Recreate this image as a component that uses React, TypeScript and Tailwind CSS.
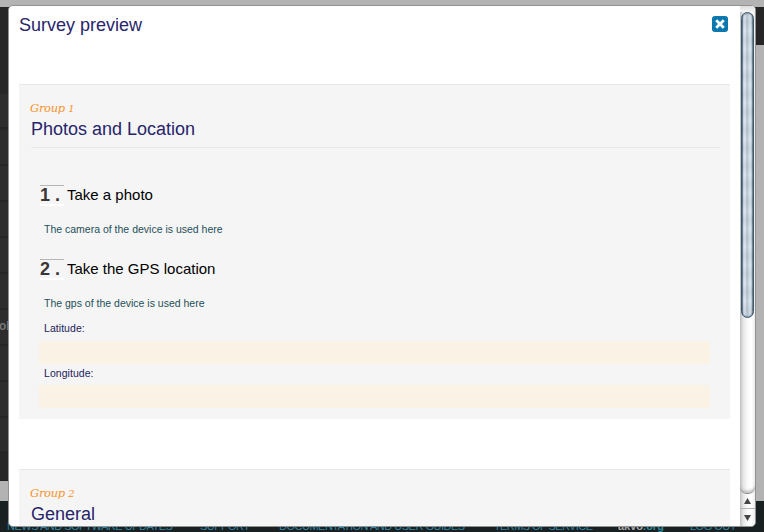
import type { ReactNode } from "react";

const sans = "font-['Liberation_Sans',Arial,sans-serif]";

function Backdrop() {
  return (
    <div className="flex h-full flex-col bg-[#b3b3b3]">
      <div className="h-[7px] shrink-0" />
      <div className="flex h-[474px] shrink-0 justify-between">
        <div className="w-[9px] overflow-hidden bg-[#262626] pt-[87px]">
          {[0, 1, 2, 3, 4, 5, 6, 7, 8, 9].map((i) => (
            <div key={i} className={i === 9 ? "h-[33px] bg-[#2d2d2d]" : i === 0 ? "h-[36px] border-b-[3px] border-[#252525] bg-[#2d2d2d]" : "h-[36px] border-b-2 border-[#252525] bg-[#2d2d2d]"}>
              {i === 6 && <div className="-ml-px pt-[8px] text-[12px] leading-[16px] font-bold text-[#777]">ol</div>}
            </div>
          ))}
        </div>
        <div className="h-[38px] w-[9px] bg-[#262626]" />
      </div>
      <div className="h-[20px] shrink-0" />
      <div className="relative flex-1 overflow-hidden bg-[#182022] text-[11px] leading-[12px] whitespace-nowrap text-[#3285a3]">
        <span className="absolute top-[19px] left-[7px] tracking-[-0.5px]">NEWS AND SOFTWARE UPDATES</span>
        <span className="absolute top-[19px] left-[200px] tracking-[-0.5px]">SUPPORT</span>
        <span className="absolute top-[19px] left-[279px] tracking-[-0.5px]">DOCUMENTATION AND USER GUIDES</span>
        <span className="absolute top-[19px] left-[494px] tracking-[-0.6px]">TERMS OF SERVICE</span>
        <span className="absolute top-[19px] left-[618px] text-[11px] font-bold text-[#aaa]">akvo<span className="text-[#2c8a99]">.org</span></span>
        <span className="absolute top-[19px] left-[690px] tracking-[-0.5px]">LOG OUT</span>
      </div>
    </div>
  );
}

function Group({ index, title, className, children }: { index: number; title: string; className: string; children?: ReactNode }) {
  return (
    <section className={`w-[711px] shrink-0 border-t border-[#e8e8e8] bg-[#f5f5f5] pt-[14px] ${className}`}>
      <div className="ml-[11px] h-[18px] font-['DejaVu_Serif',serif] text-[11.5px] leading-[18px] tracking-[-0.3px] text-[#f9932c] italic">
        Group <span className="text-[10px]">{index}</span>
      </div>
      <h2 className="mr-[10px] ml-[12px] h-[31px] border-b border-[#e9e9e9] text-[18px] leading-[24px] text-[#27246b]">{title}</h2>
      {children}
    </section>
  );
}

function Question({ n, title, help }: { n: number; title: string; help: string }) {
  return (
    <div className="h-[74px]">
      <div className="flex h-[21px]">
        <span className="h-[21px] w-[24px] border-t border-b-2 border-t-[#b5b5b5] border-b-white text-[18px] leading-[19px] font-bold whitespace-pre text-[#3a3637]">{n} .</span>
        <span className="ml-[3px] text-[15px] leading-[19px] text-black">{title}</span>
      </div>
      <p className="mt-[15px] ml-[4px] text-[10.5px] leading-[16px] text-[#244f59]">{help}</p>
    </div>
  );
}

function Field({ label, className }: { label: string; className: string }) {
  return (
    <label className="block h-[44px]">
      <span className={`ml-[4px] block h-[20px] text-[10.5px] tracking-[0.05px] text-[#1d1b5b] ${className}`}>{label}</span>
      <span className="-ml-px block h-[23px] w-[671px] bg-[#faf2e5]" />
    </label>
  );
}

function Scrollbar() {
  return (
    <div className="flex w-[15px] shrink-0 flex-col bg-[linear-gradient(90deg,#bebebe,#e4e4e4_20%,#fafafa_50%,#fff_75%,#ededed)]">
      <div className="h-[6px] shrink-0 bg-[linear-gradient(#ddd,#f6f6f6)]" />
      <div className="relative mx-px h-[306px] shrink-0 overflow-hidden rounded-[7px] border border-[#40566c] bg-[linear-gradient(90deg,#557087_0%,#d5dfe8_14%,#dce5ed_30%,#b0bdca_45%,#bbc8d4_52%,#d6e1ea_66%,#d3e1ea_84%,#708293_100%)] shadow-[inset_0_0_2px_#10283d]">
        <div className="absolute inset-0 bg-[repeating-linear-gradient(#ffffff15_0px,#60758a18_9px,#ffffff15_18px)]" />
      </div>
      <div className="h-[175px] shrink-0 rounded-b-[7px] shadow-[0_1px_0_#8b8b8b,inset_0_-4px_3px_-2px_#bbb]" />
      <div className="flex h-[16px] shrink-0 items-center justify-center border-b border-[#b4b4b4]">
        <svg width="7" height="6"><path d="M3.5 0L7 6H0Z" fill="#454545" /></svg>
      </div>
      <div className="flex flex-1 items-center justify-center">
        <svg width="7" height="6"><path d="M3.5 6L7 0H0Z" fill="#454545" /></svg>
      </div>
    </div>
  );
}

export default function App() {
  return (
    <div className={`relative h-[532px] w-[764px] overflow-hidden ${sans}`}>
      <Backdrop />
      <div className="absolute top-[5px] left-[8px] flex h-[522px] w-[748px] overflow-hidden rounded-[5px] border border-[#929292] bg-white">
        <div className="flex flex-1 flex-col overflow-hidden pl-[10px]">
          <header className="flex h-[78px] shrink-0 justify-between pt-[8px] pr-[12px]">
            <h1 className="text-[18px] leading-[22px] text-[#27246b]">Survey preview</h1>
            <button aria-label="Close" className="mt-[2px] flex size-[16px] items-center justify-center rounded-[3px] bg-[#0878ae]">
              <svg width="10" height="10" viewBox="0 0 10 10" fill="none" stroke="#fff" strokeWidth="2.8"><path d="M1.2 1.2L8.8 8.8M8.8 1.2L1.2 8.8" /></svg>
            </button>
          </header>
          <Group index={1} title="Photos and Location" className="h-[335px]">
            <div className="pt-[37px] pl-[21px]">
              <Question n={1} title="Take a photo" help="The camera of the device is used here" />
              <Question n={2} title="Take the GPS location" help="The gps of the device is used here" />
              <div className="-mt-[12px]">
                <Field label="Latitude:" className="leading-[15px]" />
                <Field label="Longitude:" className="leading-[17px]" />
              </div>
            </div>
          </Group>
          <div className="h-[50px] shrink-0" />
          <Group index={2} title="General" className="h-[80px]" />
        </div>
        <Scrollbar />
      </div>
    </div>
  );
}
